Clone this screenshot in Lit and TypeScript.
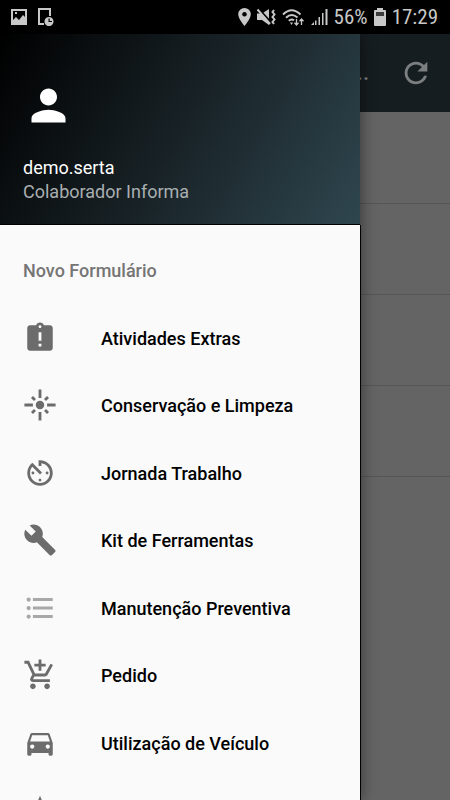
import { LitElement, html, css, svg } from "lit";
import { customElement } from "lit/decorators.js";
import { classMap } from "lit/directives/class-map.js";

interface Entry {
  label: string;
  path: string;
  faded?: boolean;
}

const ENTRIES: Entry[] = [
  {
    label: "Atividades Extras",
    path: "M19 3h-4.18C14.4 1.84 13.3 1 12 1c-1.3 0-2.4.84-2.82 2H5c-1.1 0-2 .9-2 2v14c0 1.1.9 2 2 2h14c1.1 0 2-.9 2-2V5c0-1.1-.9-2-2-2zm-6 15h-2v-2h2v2zm0-4h-2V8h2v6zm-1-9c-.55 0-1-.45-1-1s.45-1 1-1 1 .45 1 1-.45 1-1 1z",
  },
  {
    label: "Conservação e Limpeza",
    path: "M7 11H1v2h6v-2zm2.17-3.24L7.05 5.64 5.64 7.05l2.12 2.12 1.41-1.41zM13 1h-2v6h2V1zm5.36 6.05l-1.41-1.41-2.12 2.12 1.41 1.41 2.12-2.12zM17 11v2h6v-2h-6zm-5-2c-1.66 0-3 1.34-3 3s1.34 3 3 3 3-1.34 3-3-1.34-3-3-3zm2.83 7.24l2.12 2.12 1.41-1.41-2.12-2.12-1.41 1.41zm-9.19.71l1.41 1.41 2.12-2.12-1.41-1.41-2.12 2.12zM11 23h2v-6h-2v6z",
  },
  {
    label: "Jornada Trabalho",
    path: "M11 17c0 .55.45 1 1 1s1-.45 1-1-.45-1-1-1-1 .45-1 1zm0-14v4h2V5.08c3.39.49 6 3.39 6 6.92 0 3.87-3.13 7-7 7s-7-3.13-7-7c0-1.68.59-3.22 1.58-4.42L12 13l1.41-1.41-6.8-6.8v.02C4.42 6.45 3 9.05 3 12c0 4.97 4.02 9 9 9 4.97 0 9-4.03 9-9s-4.03-9-9-9h-1zm7 9c0-.55-.45-1-1-1s-1 .45-1 1 .45 1 1 1 1-.45 1-1zM6 12c0 .55.45 1 1 1s1-.45 1-1-.45-1-1-1-1 .45-1 1z",
  },
  {
    label: "Kit de Ferramentas",
    path: "M22.7 19l-9.1-9.1c.9-2.3.4-5-1.5-6.9-2-2-5-2.4-7.4-1.3L9 6 6 9 1.6 4.7C.4 7.1.9 10.1 2.9 12.1c1.9 1.9 4.6 2.4 6.9 1.5l9.1 9.1c.4.4 1 .4 1.4 0l2.3-2.3c.5-.4.5-1.1.1-1.4z",
  },
  {
    label: "Manutenção Preventiva",
    faded: true,
    path: "M4 10.5c-.83 0-1.5.67-1.5 1.5s.67 1.5 1.5 1.5 1.5-.67 1.5-1.5-.67-1.5-1.5-1.5zm0-6c-.83 0-1.5.67-1.5 1.5S3.17 7.5 4 7.5 5.5 6.83 5.5 6 4.83 4.5 4 4.5zm0 12c-.83 0-1.5.68-1.5 1.5s.68 1.5 1.5 1.5 1.5-.68 1.5-1.5-.67-1.5-1.5-1.5zM7 19h14v-2H7v2zm0-6h14v-2H7v2zm0-8v2h14V5H7z",
  },
  {
    label: "Pedido",
    path: "M11 9h2V6h3V4h-3V1h-2v3H8v2h3v3zm-4 9c-1.1 0-1.99.9-1.99 2S5.9 22 7 22s2-.9 2-2-.9-2-2-2zm10 0c-1.1 0-1.99.9-1.99 2s.89 2 1.99 2 2-.9 2-2-.9-2-2-2zm-9.83-3.25l.03-.12.9-1.63h7.45c.75 0 1.41-.41 1.75-1.03l3.86-7.01L19.42 4h-.01l-1.1 2-2.76 5H8.53l-.13-.27L6.16 6l-.95-2-.94-2H1v2h2l3.6 7.59-1.35 2.45c-.16.28-.25.61-.25.96 0 1.1.9 2 2 2h12v-2H7.42c-.13 0-.25-.11-.25-.25z",
  },
  {
    label: "Utilização de Veículo",
    path: "M18.92 6.01C18.72 5.42 18.16 5 17.5 5h-11c-.66 0-1.21.42-1.42 1.01L3 12v8c0 .55.45 1 1 1h1c.55 0 1-.45 1-1v-1h12v1c0 .55.45 1 1 1h1c.55 0 1-.45 1-1v-8l-2.08-5.99zM6.5 16c-.83 0-1.5-.67-1.5-1.5S5.67 13 6.5 13s1.5.67 1.5 1.5S7.33 16 6.5 16zm11 0c-.83 0-1.5-.67-1.5-1.5s.67-1.5 1.5-1.5 1.5.67 1.5 1.5-.67 1.5-1.5 1.5zM5 11l1.5-4.5h11L19 11H5z",
  },
  {
    label: "",
    path: "M12 17.27L18.18 21l-1.64-7.03L22 9.24l-7.19-.61L12 2 9.19 8.63 2 9.24l5.46 4.73L5.82 21z",
  },
];

const glyph = (path: string) =>
  html`<svg class="icon" viewBox="0 0 24 24" aria-hidden="true">${svg`<path d=${path} />`}</svg>`;

@customElement("status-bar")
export class StatusBar extends LitElement {
  static styles = css`
    :host {
      display: flex;
      align-items: center;
      justify-content: space-between;
      height: 34px;
      padding: 0 12px 0 10px;
      background: #000;
      color: #c8c8c8;
      font: 21px/24px "Roboto Condensed", Roboto, sans-serif;
    }
    .group {
      display: flex;
      align-items: center;
      gap: 6px;
    }
    .left {
      gap: 9px;
    }
    svg {
      display: block;
      fill: currentColor;
    }
    .line {
      fill: none;
      stroke: currentColor;
      stroke-width: 2;
    }
    .thin {
      fill: none;
      stroke: currentColor;
      stroke-width: 1.3;
    }
  `;

  render() {
    return html`
      <div class="group left">
        <svg width="18" height="18" viewBox="0 0 18 18" aria-hidden="true">
          <path fill-rule="evenodd" d="M1 1h16v16H1zM3 3v9l3-3 3 3 4-5 2 2V3zM5 4h2v2H5z" />
        </svg>
        <svg width="18" height="18" viewBox="0 0 18 18" aria-hidden="true">
          <path class="line" d="M13 8V1H2v15h5" />
          <path fill-rule="evenodd" d="M12 9a4.500 4.500 0 1 0 .01 0zM11.500 10.500h1.200v2.400h2.300v1.200h-3.500z" />
        </svg>
      </div>
      <div class="group">
        <svg width="13" height="18" viewBox="0 0 13 18" aria-hidden="true">
          <path fill-rule="evenodd" d="M6.500 0A6.300 6.300 0 0 0 .2 6.300C.2 11 6.500 18 6.500 18s6.300-7 6.300-11.700A6.300 6.300 0 0 0 6.500 0zM6.500 4a2.300 2.300 0 1 1-.01 0z" />
        </svg>
        <svg width="19" height="18" viewBox="0 0 19 18" aria-hidden="true">
          <path d="M0 5.500h5L12 1v16l-7-5H0z" />
          <path d="M1 0l13.500 15" stroke="#000" stroke-width="2" />
          <path class="line" d="M.5 1.500l12.500 14.500" />
          <path class="line" d="M17 2l-1.500 2 2 2.500-2 2.500 2 2.500-2 2.500 1.500 2" />
        </svg>
        <svg width="23" height="18" viewBox="0 0 23 18" aria-hidden="true">
          <path class="line" d="M1 6.500Q9.500-2 18.500 6.500M4 9.800Q9.500 4.500 15.500 9.500M6.800 12.800Q9.500 10.500 12 12.300" />
          <path d="M8 14.500h3l-1.500 2.500z" />
          <path class="thin" d="M14.500 11v6M12.500 14.800l2 2.200 2-2.200M19.500 17v-6M17.500 13.200l2-2.200 2 2.200" />
        </svg>
        <svg width="17" height="18" viewBox="0 0 17 18" aria-hidden="true">
          <path d="M0 17l3-3v3zM4 12.500h1.500V17H4zM7.500 9H9v8H7.500zM11 5h1.500v12H11zM14.500 1h2v16h-2z" />
        </svg>
        <span>56%</span>
        <svg width="12" height="18" viewBox="0 0 12 18" aria-hidden="true">
          <path fill-rule="evenodd" d="M3 0h6v2h2q1 0 1 1v14q0 1-1 1H1q-1 0-1-1V3q0-1 1-1h2zM2 4v4h8V4z" />
          <path d="M2 4h8v4H2z" opacity="0.3" />
        </svg>
        <span>17:29</span>
      </div>
    `;
  }
}

@customElement("nav-drawer")
export class NavDrawer extends LitElement {
  static styles = css`
    :host {
      display: flex;
      flex-direction: column;
      background: #fafafa;
      font: 500 18px/24px Roboto, sans-serif;
      color: #000;
      box-shadow: 2px 0 14px rgba(0, 0, 0, 0.4);
    }
    .profile {
      flex: none;
      padding: 46px 23px 20px;
      border-bottom: 1px solid #000;
      background: linear-gradient(120deg, #000 0%, #182226 50%, #2f464f 100%);
      color: #fff;
      font-weight: 400;
    }
    .avatar {
      display: block;
      width: 51px;
      height: 51px;
      margin-bottom: 25px;
      fill: #fff;
    }
    .role {
      color: #a9afb1;
    }
    nav {
      flex: 1;
      min-height: 0;
      box-shadow: 1px 0 0 #000;
    }
    h2 {
      margin: 0;
      padding: 34px 23px 22px;
      font: inherit;
      color: #757575;
    }
    ul {
      display: grid;
      grid-auto-rows: 67px 68px;
      margin: 0;
      padding: 0;
      list-style: none;
    }
    a {
      display: flex;
      align-items: center;
      gap: 44px;
      height: 100%;
      padding: 0 23px;
      color: inherit;
      text-decoration: none;
    }
    .icon {
      flex: none;
      width: 34px;
      height: 34px;
      margin-bottom: 2px;
      fill: #6c6c6c;
    }
    .faded .icon {
      fill: #a8a8a8;
    }
  `;

  render() {
    return html`
      <header class="profile">
        <svg class="avatar" viewBox="0 0 24 24" aria-hidden="true">
          <path d="M12 12c2.210 0 4-1.790 4-4s-1.790-4-4-4-4 1.790-4 4 1.790 4 4 4zm0 2c-2.670 0-8 1.340-8 4v2h16v-2c0-2.660-5.330-4-8-4z" />
        </svg>
        <div>demo.serta</div>
        <div class="role">Colaborador Informa</div>
      </header>
      <nav>
        <h2>Novo Formulário</h2>
        <ul>
          ${ENTRIES.map(
            (e) => html`<li>
              <a href="#" class=${classMap({ faded: !!e.faded })}>
                ${glyph(e.path)}<span>${e.label}</span>
              </a>
            </li>`
          )}
        </ul>
      </nav>
    `;
  }
}

@customElement("app-root")
export class AppRoot extends LitElement {
  static styles = css`
    :host {
      display: flex;
      flex-direction: column;
      height: 100vh;
      overflow: hidden;
      background: #646464;
    }
    status-bar {
      flex: none;
    }
    main {
      position: relative;
      flex: 1;
      min-height: 0;
      overflow: hidden;
    }
    .appbar {
      display: flex;
      align-items: center;
      justify-content: flex-end;
      gap: 30px;
      height: 78px;
      padding-right: 17px;
      box-sizing: border-box;
      background: #161d20;
      color: #7c7f81;
      font: 500 22px/28px Roboto, sans-serif;
    }
    button {
      padding: 0;
      border: 0;
      background: none;
      color: inherit;
    }
    .icon {
      display: block;
      width: 34px;
      height: 34px;
      fill: currentColor;
    }
    .row {
      box-sizing: border-box;
      height: 91px;
      border-bottom: 1px solid #555;
    }
    .row:first-child {
      height: 92px;
    }
    nav-drawer {
      position: absolute;
      top: 0;
      bottom: 0;
      left: 0;
      width: 80%;
    }
  `;

  render() {
    return html`
      <status-bar></status-bar>
      <main>
        <div class="appbar">
          <span>...</span>
          <button aria-label="Atualizar">
            ${glyph(
              "M17.65 6.35C16.2 4.9 14.21 4 12 4c-4.42 0-7.99 3.58-7.99 8s3.57 8 7.99 8c3.73 0 6.84-2.55 7.73-6h-2.08c-.82 2.33-3.04 4-5.65 4-3.31 0-6-2.69-6-6s2.69-6 6-6c1.66 0 3.14.69 4.22 1.78L13 11h7V4l-2.35 2.35z"
            )}
          </button>
        </div>
        <div>
          ${[0, 1, 2, 3].map(() => html`<div class="row"></div>`)}
        </div>
        <nav-drawer></nav-drawer>
      </main>
    `;
  }
}
